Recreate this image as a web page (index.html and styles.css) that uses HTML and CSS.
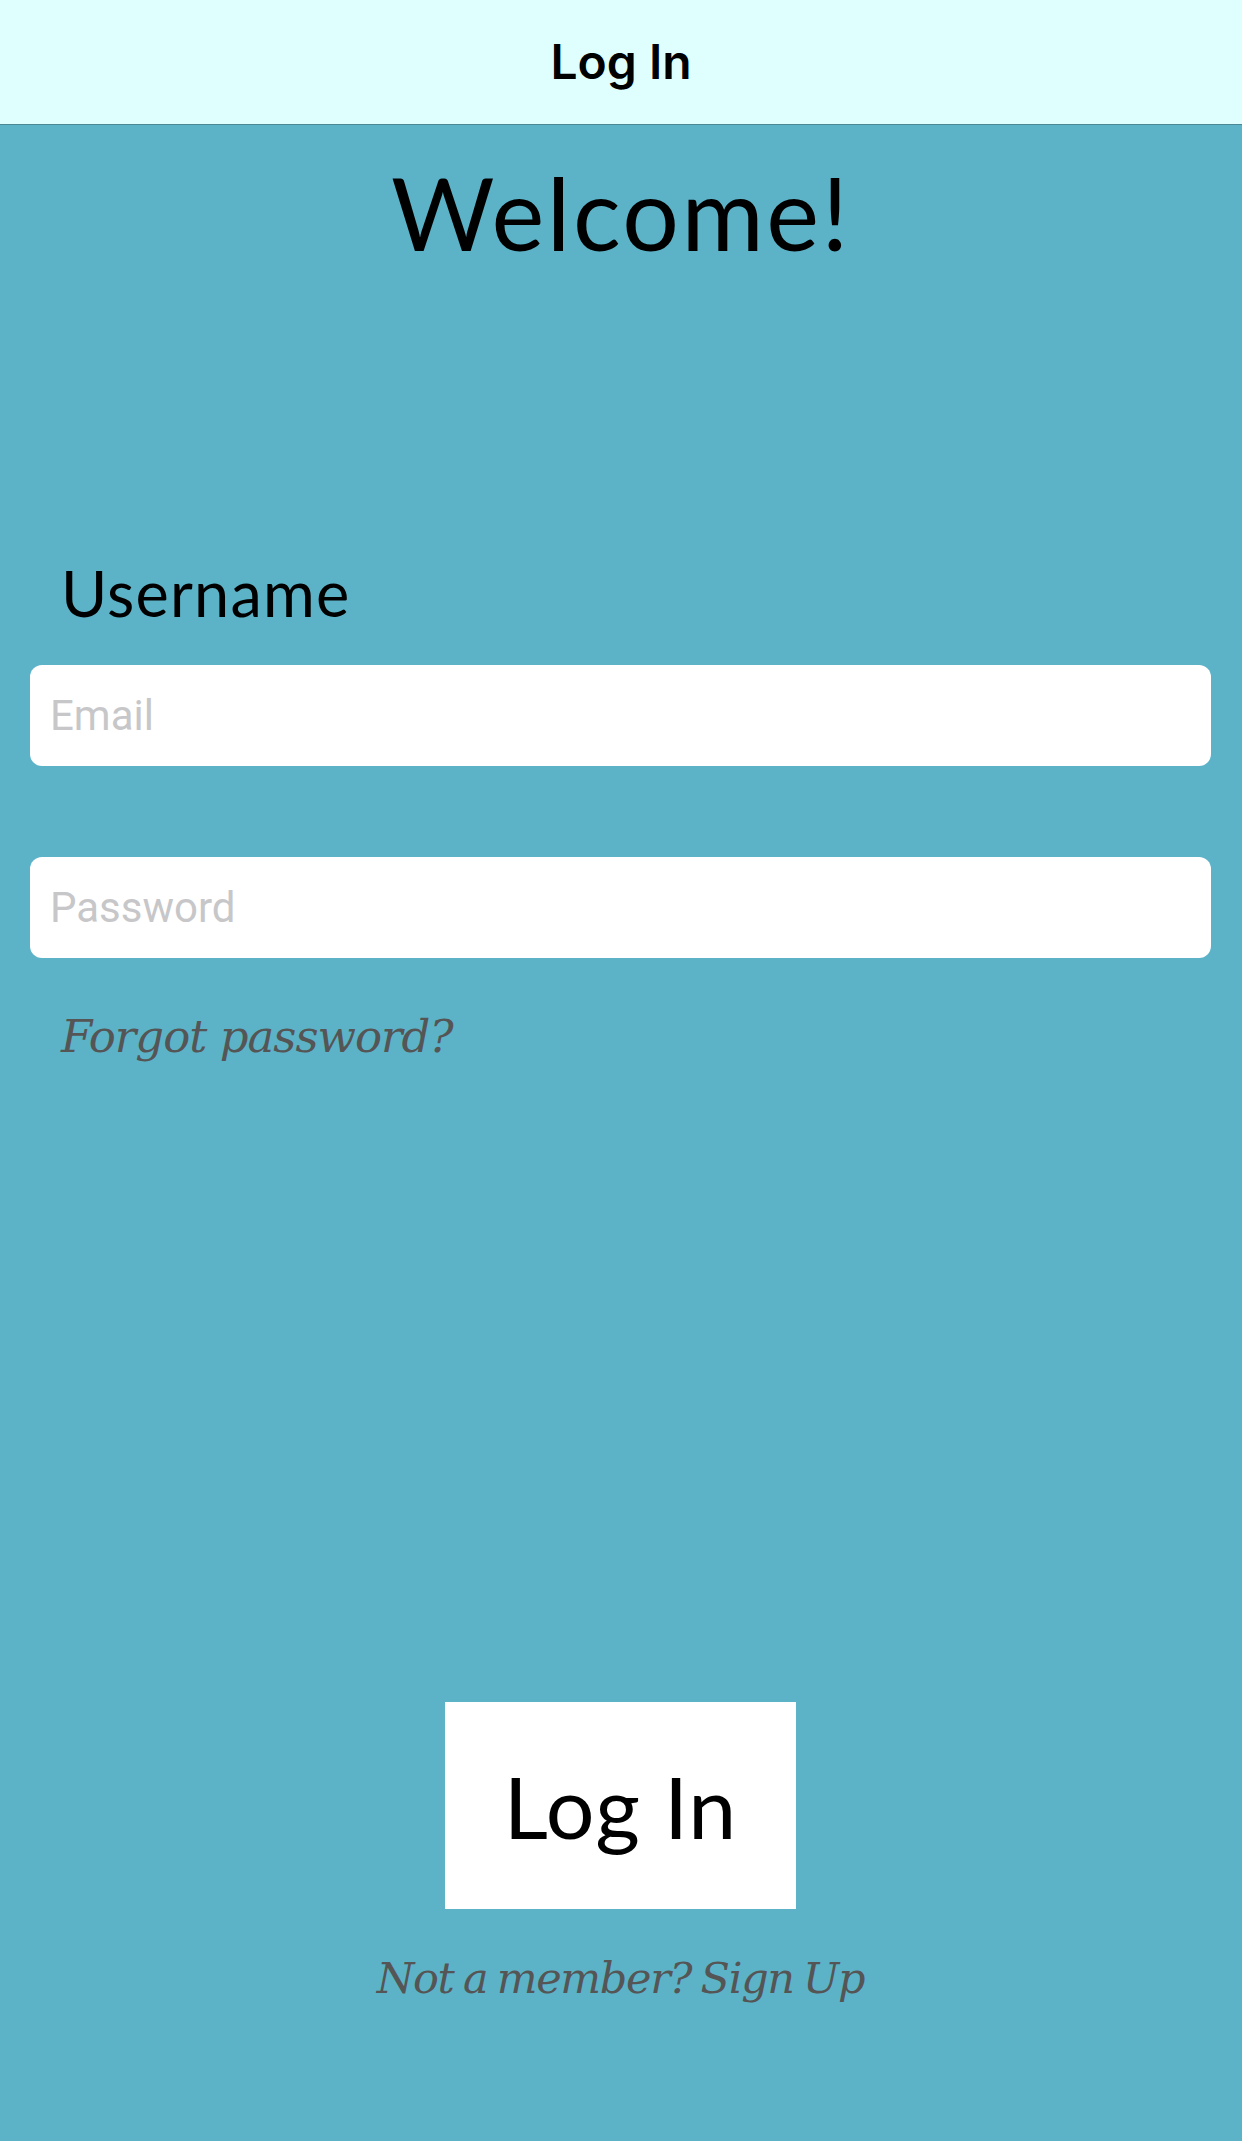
FILE: index.html
```html
<!DOCTYPE html>
<html lang="en">
<head>
<meta charset="utf-8">
<title>Log In</title>
<link rel="stylesheet" href="styles.css">
</head>
<body>
<header class="nav">
  <h1 class="nav-title">Log In</h1>
</header>
<main class="screen">
  <h2 class="welcome">Welcome!</h2>
  <form class="form">
    <label class="label" for="email">Username</label>
    <input class="field field-email" id="email" type="text" placeholder="Email">
    <input class="field field-pass" type="password" placeholder="Password">
    <a class="forgot" href="#">Forgot password?</a>
    <button class="login" type="button">Log In</button>
    <a class="signup" href="#">Not a member? Sign Up</a>
  </form>
</main>
</body>
</html>
```
FILE: styles.css
```css
* { box-sizing: border-box; }
html, body { margin: 0; padding: 0; }
body {
  width: 1242px;
  height: 2141px;
  background: #5cb3c8;
  overflow: hidden;
}
.nav {
  height: 125px;
  background: #dfffff;
  border-bottom: 1px solid #4b8896;
  display: flex;
  align-items: center;
  justify-content: center;
}
.nav-title {
  margin: 0;
  font-family: Inter, "Liberation Sans", sans-serif;
  font-weight: 600;
  font-size: 48px;
  line-height: 1;
  color: #000;
  letter-spacing: 0;
}
.screen {
  display: flex;
  flex-direction: column;
}
.welcome {
  margin: 37px 0 0;
  text-align: center;
  font-family: Lato, "Open Sans", sans-serif;
  font-weight: 400;
  font-size: 100px;
  line-height: 100px;
  letter-spacing: 2.5px;
  color: #000;
}
.form {
  display: flex;
  flex-direction: column;
  padding: 0 31px 0 30px;
}
.label {
  margin: 299px 0 0 31px;
  font-family: Lato, "Open Sans", sans-serif;
  font-size: 63px;
  line-height: 63px;
  letter-spacing: 1.2px;
  color: #000;
}
.field {
  display: block;
  width: 100%;
  height: 101px;
  margin: 41px 0 0;
  padding: 0 20px;
  border: none;
  border-radius: 12px;
  background: #fff;
  font-family: Roboto, "Noto Sans", sans-serif;
  font-size: 42px;
  color: #000;
  outline: none;
}
.field::placeholder { color: #c7c7c9; }
.field-pass { margin-top: 91px; }
.forgot {
  align-self: flex-start;
  margin: 56px 0 0 31px;
  font-family: "DejaVu Serif", Georgia, serif;
  font-style: italic;
  font-size: 45px;
  line-height: 45px;
  letter-spacing: -1px;
  color: #555;
  text-decoration: none;
}
.login {
  align-self: center;
  width: 351px;
  height: 207px;
  margin: 643px 0 0;
  border: none;
  background: #fff;
  font-family: Lato, "Open Sans", sans-serif;
  font-size: 86px;
  line-height: 1;
  letter-spacing: 1px;
  color: #000;
  padding: 0;
}
.signup {
  align-self: center;
  margin: 48px 0 0;
  font-family: "DejaVu Serif", Georgia, serif;
  font-style: italic;
  font-size: 43px;
  line-height: 43px;
  letter-spacing: -1.3px;
  word-spacing: -3px;
  color: #555;
  text-decoration: none;
}
```
